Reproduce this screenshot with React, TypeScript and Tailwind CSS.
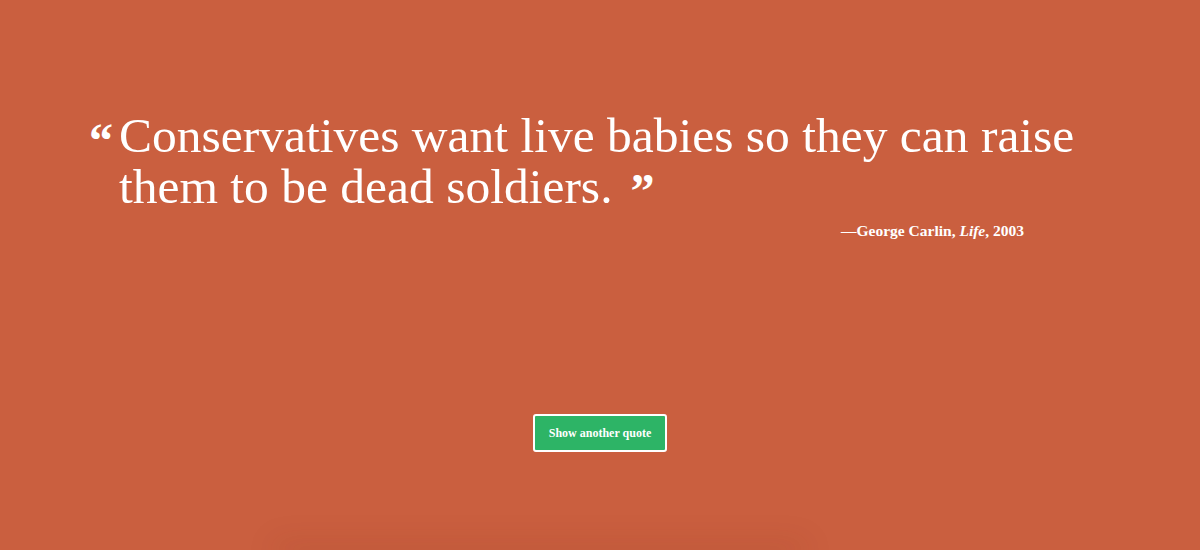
const quote = {
  text: "Conservatives want live babies so they can raise them to be dead soldiers.",
  author: "George Carlin",
  source: "Life",
  year: "2003",
};

const App = () => {
  return (
    <div className="h-[550px] w-full overflow-hidden bg-[#ca5f3f] text-white font-['Liberation_Serif',serif] flex flex-col">
      <section className="pt-[110px] pl-[89px] pr-[100px]">
        <blockquote className="flex items-start">
          <span className="text-[48px] leading-none font-bold mt-[7px] mr-[6px]">&ldquo;</span>
          <p className="text-[49.5px] leading-[51px] max-w-[1000px]">
            {quote.text}
            <span className="text-[48px] font-bold ml-[18px] leading-none align-[-4px]">&rdquo;</span>
          </p>
        </blockquote>
        <p className="mt-[4px] text-right pr-[76px] text-[15.5px] font-bold">
          &mdash;{quote.author}, <i>{quote.source}</i>, {quote.year}
        </p>
      </section>

      <div className="flex justify-center mt-[172px]">
        <button className="h-[38px] px-[14px] bg-[#2db466] border-2 border-white rounded-[3px] text-[12px] font-bold text-white">
          Show another quote
        </button>
      </div>

      <div className="mt-auto ml-[280px] w-[520px] h-0 shadow-[0_0_30px_6px_rgba(120,40,20,0.18)]" />
    </div>
  );
};

export default App;
